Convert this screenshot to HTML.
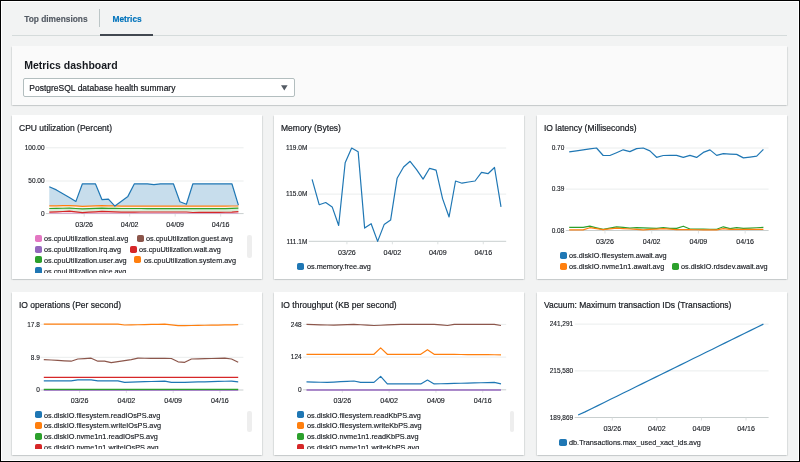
<!DOCTYPE html>
<html><head><meta charset="utf-8"><style>
html,body{margin:0;padding:0;}
.gs{will-change:transform;}
body{width:800px;height:462px;overflow:hidden;position:relative;background:#000;font-family:"Liberation Sans", sans-serif;}
#frame{position:absolute;left:1px;top:1px;width:798px;height:460px;background:#fff;}
#bg{position:absolute;left:2px;top:2px;width:796px;height:458px;background:#f2f3f3;}
.abs{position:absolute;}
.tab{position:absolute;font-size:8.35px;font-weight:700;line-height:8.5px;white-space:nowrap;-webkit-text-stroke:0.15px currentColor;}
.panel{position:absolute;background:#fff;box-shadow:0 0.8px 1.5px 0 rgba(0,28,36,.18),1px 1px 1px 0 rgba(0,28,36,.06),-1px 1px 1px 0 rgba(0,28,36,.06);}
.ptitle{position:absolute;transform:scaleX(0.944);transform-origin:0 0;font-size:9px;line-height:8.5px;color:#16191f;white-space:nowrap;-webkit-text-stroke:0.2px #16191f;}
.lclip{position:absolute;overflow:hidden;}
.sq{position:absolute;width:7.1px;height:7.0px;border-radius:1.8px;}
.lt{position:absolute;transform:scaleX(0.924);transform-origin:0 0;font-size:7.9px;line-height:9px;color:#16191f;white-space:nowrap;-webkit-text-stroke:0.15px #16191f;}
.sb{position:absolute;width:4.3px;background:#eeeeee;border-radius:2.2px;}
svg text{font-family:"Liberation Sans", sans-serif;fill:#16191f;}
.yl{font-size:6.5px;stroke:#16191f;stroke-width:0.12px;}
.xl{font-size:7.1px;stroke:#16191f;stroke-width:0.12px;}
</style></head><body>
<div id="frame"></div>
<div id="bg"></div>
<div class="gs abs" style="left:0;top:0;width:800px;height:462px">
<div class="tab" style="left:24.2px;top:14.9px;color:#545b64">Top dimensions</div>
<div class="abs" style="left:99px;top:9.4px;width:0.8px;height:18px;background:#bcc6c7"></div>
<div class="tab" style="left:112.5px;top:14.9px;color:#0073bb">Metrics</div>
<div class="abs" style="left:11.6px;top:35px;width:775.8px;height:1px;background:#d5dbdb"></div>
<div class="abs" style="left:100.1px;top:34.1px;width:52.7px;height:1.8px;background:#414750"></div>
<div class="panel" style="left:11.9px;top:46.1px;width:775.4px;height:59px;background:#fafafa"></div>
<div class="abs" style="left:24.2px;top:59.9px;font-size:10.5px;line-height:10.5px;font-weight:700;color:#16191f;white-space:nowrap">Metrics dashboard</div>
<div class="abs" style="left:23.4px;top:77.7px;width:269.4px;height:17.6px;border:1.3px solid #b3bebf;border-radius:2px;background:#fff"></div>
<div class="abs" style="left:29.3px;top:84.0px;font-size:8.5px;line-height:8.5px;color:#16191f;white-space:nowrap;-webkit-text-stroke:0.2px #16191f">PostgreSQL database health summary</div>
<svg class="abs" style="left:0;top:0" width="800" height="462"><polygon points="281,85.2 287.6,85.2 284.3,90.4" fill="#545b64"/></svg>
<div class="panel" style="left:11.7px;top:115.0px;width:250.40px;height:164.00px"></div><div class="ptitle" style="left:19.00px;top:124.03px">CPU utilization (Percent)</div><div class="lclip" style="left:11.7px;top:232.0px;width:230.40px;height:41.00px"><div class="sq" style="left:22.90px;top:2.60px;background:#e377c2"></div><div class="lt" style="left:32.50px;top:1.86px">os.cpuUtilization.steal.avg</div><div class="sq" style="left:125.10px;top:2.60px;background:#8c564b"></div><div class="lt" style="left:134.70px;top:1.86px">os.cpuUtilization.guest.avg</div><div class="sq" style="left:22.90px;top:13.50px;background:#9467bd"></div><div class="lt" style="left:32.50px;top:12.76px">os.cpuUtilization.irq.avg</div><div class="sq" style="left:118.10px;top:13.50px;background:#d62728"></div><div class="lt" style="left:127.70px;top:12.76px">os.cpuUtilization.wait.avg</div><div class="sq" style="left:22.90px;top:24.40px;background:#2ca02c"></div><div class="lt" style="left:32.50px;top:23.66px">os.cpuUtilization.user.avg</div><div class="sq" style="left:122.40px;top:24.40px;background:#ff7f0e"></div><div class="lt" style="left:132.00px;top:23.66px">os.cpuUtilization.system.avg</div><div class="sq" style="left:22.90px;top:35.30px;background:#1f77b4"></div><div class="lt" style="left:32.50px;top:34.56px">os.cpuUtilization.nice.avg</div></div><div class="sb" style="left:247.3px;top:234.9px;height:23.10px"></div><div class="panel" style="left:274.0px;top:115.0px;width:250.40px;height:164.00px"></div><div class="ptitle" style="left:281.30px;top:124.03px">Memory (Bytes)</div><div class="lclip" style="left:274.0px;top:260.8px;width:246.40px;height:40px"><div class="sq" style="left:23.30px;top:2.00px;background:#1f77b4"></div><div class="lt" style="left:32.90px;top:1.26px">os.memory.free.avg</div></div><div class="panel" style="left:536.6px;top:115.0px;width:250.40px;height:164.00px"></div><div class="ptitle" style="left:543.90px;top:124.03px">IO latency (Milliseconds)</div><div class="lclip" style="left:536.6px;top:249.9px;width:246.40px;height:40px"><div class="sq" style="left:23.20px;top:2.00px;background:#1f77b4"></div><div class="lt" style="left:32.80px;top:1.26px">os.diskIO.filesystem.await.avg</div><div class="sq" style="left:23.20px;top:12.90px;background:#ff7f0e"></div><div class="lt" style="left:32.80px;top:12.16px">os.diskIO.nvme1n1.await.avg</div><div class="sq" style="left:135.30px;top:12.90px;background:#2ca02c"></div><div class="lt" style="left:144.90px;top:12.16px">os.diskIO.rdsdev.await.avg</div></div><div class="panel" style="left:11.7px;top:291.6px;width:250.40px;height:163.00px"></div><div class="ptitle" style="left:19.00px;top:300.63px">IO operations (Per second)</div><div class="lclip" style="left:11.7px;top:408.5px;width:230.40px;height:40.70px"><div class="sq" style="left:22.90px;top:2.80px;background:#1f77b4"></div><div class="lt" style="left:32.50px;top:2.06px">os.diskIO.filesystem.readIOsPS.avg</div><div class="sq" style="left:22.90px;top:13.70px;background:#ff7f0e"></div><div class="lt" style="left:32.50px;top:12.96px">os.diskIO.filesystem.writeIOsPS.avg</div><div class="sq" style="left:22.90px;top:24.60px;background:#2ca02c"></div><div class="lt" style="left:32.50px;top:23.86px">os.diskIO.nvme1n1.readIOsPS.avg</div><div class="sq" style="left:22.90px;top:35.50px;background:#d62728"></div><div class="lt" style="left:32.50px;top:34.76px">os.diskIO.nvme1n1.writeIOsPS.avg</div></div><div class="sb" style="left:247.3px;top:411.0px;height:20.60px"></div><div class="panel" style="left:274.0px;top:291.6px;width:250.40px;height:163.00px"></div><div class="ptitle" style="left:281.30px;top:300.63px">IO throughput (KB per second)</div><div class="lclip" style="left:274.0px;top:408.5px;width:230.40px;height:40.70px"><div class="sq" style="left:23.00px;top:2.80px;background:#1f77b4"></div><div class="lt" style="left:32.60px;top:2.06px">os.diskIO.filesystem.readKbPS.avg</div><div class="sq" style="left:23.00px;top:13.70px;background:#ff7f0e"></div><div class="lt" style="left:32.60px;top:12.96px">os.diskIO.filesystem.writeKbPS.avg</div><div class="sq" style="left:23.00px;top:24.60px;background:#2ca02c"></div><div class="lt" style="left:32.60px;top:23.86px">os.diskIO.nvme1n1.readKbPS.avg</div><div class="sq" style="left:23.00px;top:35.50px;background:#d62728"></div><div class="lt" style="left:32.60px;top:34.76px">os.diskIO.nvme1n1.writeKbPS.avg</div></div><div class="sb" style="left:509.9px;top:411.0px;height:20.60px"></div><div class="panel" style="left:536.6px;top:291.6px;width:250.40px;height:163.00px"></div><div class="ptitle" style="left:543.90px;top:300.63px">Vacuum: Maximum transaction IDs (Transactions)</div><div class="lclip" style="left:536.6px;top:437.0px;width:246.40px;height:40px"><div class="sq" style="left:22.90px;top:2.00px;background:#1f77b4"></div><div class="lt" style="left:32.50px;top:1.26px">db.Transactions.max_used_xact_ids.avg</div></div>
<svg class="abs" style="left:0;top:0" width="800" height="462" viewBox="0 0 800 462">
<line x1="45.90" y1="147.8" x2="243.60" y2="147.8" stroke="#eaeded" stroke-width="1"/><text x="44.6" y="150.00" text-anchor="end" class="yl">100.00</text><line x1="45.90" y1="181.0" x2="243.60" y2="181.0" stroke="#eaeded" stroke-width="1"/><text x="44.6" y="183.20" text-anchor="end" class="yl">50.00</text><line x1="45.90" y1="213.6" x2="243.60" y2="213.6" stroke="#c9cfcf" stroke-width="1"/><text x="44.6" y="215.80" text-anchor="end" class="yl">0</text><line x1="84.16" y1="213.6" x2="84.16" y2="216.6" stroke="#d5dbdb" stroke-width="0.8"/><text x="84.16" y="226.90" text-anchor="middle" class="xl">03/26</text><line x1="129.66" y1="213.6" x2="129.66" y2="216.6" stroke="#d5dbdb" stroke-width="0.8"/><text x="129.66" y="226.90" text-anchor="middle" class="xl">04/02</text><line x1="175.16" y1="213.6" x2="175.16" y2="216.6" stroke="#d5dbdb" stroke-width="0.8"/><text x="175.16" y="226.90" text-anchor="middle" class="xl">04/09</text><line x1="220.66" y1="213.6" x2="220.66" y2="216.6" stroke="#d5dbdb" stroke-width="0.8"/><text x="220.66" y="226.90" text-anchor="middle" class="xl">04/16</text><polygon points="49.30,186.70 56.40,189.90 62.90,193.73 69.40,197.57 75.90,201.40 82.40,183.80 88.90,183.80 95.40,183.80 101.90,199.60 108.40,199.10 114.90,206.10 121.40,201.25 127.90,196.40 134.40,183.80 140.90,183.80 147.40,183.80 153.90,184.60 160.40,183.80 166.90,183.80 173.40,183.80 179.90,201.70 186.40,204.30 192.90,183.80 199.40,183.80 205.90,183.80 212.40,183.80 218.90,183.80 225.40,183.80 231.90,183.80 238.40,205.10 238.40,206.00 231.90,206.02 225.40,206.04 218.90,206.07 212.40,206.09 205.90,206.11 199.40,206.13 192.90,206.16 186.40,206.18 179.90,206.20 173.40,206.19 166.90,206.18 160.40,206.17 153.90,206.16 147.40,206.14 140.90,206.13 134.40,206.12 127.90,206.11 121.40,206.10 114.90,205.97 108.40,205.83 101.90,205.70 95.40,205.90 88.90,206.10 82.40,206.30 75.90,205.95 69.40,205.60 62.90,205.70 56.40,205.80 49.30,205.90" fill="#1f77b4" fill-opacity="0.25" stroke="none"/><polygon points="49.30,205.90 56.40,205.80 62.90,205.70 69.40,205.60 75.90,205.95 82.40,206.30 88.90,206.10 95.40,205.90 101.90,205.70 108.40,205.83 114.90,205.97 121.40,206.10 127.90,206.11 134.40,206.12 140.90,206.13 147.40,206.14 153.90,206.16 160.40,206.17 166.90,206.18 173.40,206.19 179.90,206.20 186.40,206.18 192.90,206.16 199.40,206.13 205.90,206.11 212.40,206.09 218.90,206.07 225.40,206.04 231.90,206.02 238.40,206.00 238.40,208.20 231.90,208.40 225.40,208.60 218.90,208.59 212.40,208.59 205.90,208.58 199.40,208.57 192.90,208.57 186.40,208.56 179.90,208.56 173.40,208.55 166.90,208.54 160.40,208.54 153.90,208.53 147.40,208.53 140.90,208.52 134.40,208.51 127.90,208.51 121.40,208.50 114.90,208.40 108.40,208.30 101.90,208.20 95.40,208.43 88.90,208.67 82.40,208.90 75.90,208.50 69.40,208.10 62.90,208.23 56.40,208.37 49.30,208.50" fill="#ff7f0e" fill-opacity="0.1" stroke="none"/><polygon points="49.30,208.50 56.40,208.37 62.90,208.23 69.40,208.10 75.90,208.50 82.40,208.90 88.90,208.67 95.40,208.43 101.90,208.20 108.40,208.30 114.90,208.40 121.40,208.50 127.90,208.51 134.40,208.51 140.90,208.52 147.40,208.53 153.90,208.53 160.40,208.54 166.90,208.54 173.40,208.55 179.90,208.56 186.40,208.56 192.90,208.57 199.40,208.57 205.90,208.58 212.40,208.59 218.90,208.59 225.40,208.60 231.90,208.40 238.40,208.20 238.40,211.60 231.90,212.20 225.40,212.25 218.90,212.30 212.40,212.35 205.90,212.40 199.40,212.45 192.90,212.50 186.40,212.00 179.90,212.00 173.40,212.00 166.90,212.00 160.40,212.00 153.90,212.00 147.40,212.00 140.90,212.00 134.40,212.03 127.90,212.07 121.40,212.10 114.90,211.87 108.40,211.63 101.90,211.40 95.40,211.80 88.90,212.20 82.40,212.60 75.90,211.90 69.40,211.20 62.90,211.50 56.40,211.80 49.30,212.10" fill="#2ca02c" fill-opacity="0.18" stroke="none"/><polygon points="49.30,212.10 56.40,211.80 62.90,211.50 69.40,211.20 75.90,211.90 82.40,212.60 88.90,212.20 95.40,211.80 101.90,211.40 108.40,211.63 114.90,211.87 121.40,212.10 127.90,212.07 134.40,212.03 140.90,212.00 147.40,212.00 153.90,212.00 160.40,212.00 166.90,212.00 173.40,212.00 179.90,212.00 186.40,212.00 192.90,212.50 199.40,212.45 205.90,212.40 212.40,212.35 218.90,212.30 225.40,212.25 231.90,212.20 238.40,211.60 238.40,213.20 231.90,213.20 225.40,213.20 218.90,213.20 212.40,213.20 205.90,213.20 199.40,213.20 192.90,213.20 186.40,213.20 179.90,213.20 173.40,213.20 166.90,213.20 160.40,213.20 153.90,213.20 147.40,213.20 140.90,213.20 134.40,213.20 127.90,213.20 121.40,213.20 114.90,213.20 108.40,213.20 101.90,213.20 95.40,213.20 88.90,213.20 82.40,213.20 75.90,213.20 69.40,213.20 62.90,213.20 56.40,213.20 49.30,213.20" fill="#d62728" fill-opacity="0.08" stroke="none"/><polyline points="49.30,213.20 56.40,213.20 62.90,213.20 69.40,213.20 75.90,213.20 82.40,213.20 88.90,213.20 95.40,213.20 101.90,213.20 108.40,213.20 114.90,213.20 121.40,213.20 127.90,213.20 134.40,213.20 140.90,213.20 147.40,213.20 153.90,213.20 160.40,213.20 166.90,213.20 173.40,213.20 179.90,213.20 186.40,213.20 192.90,213.20 199.40,213.20 205.90,213.20 212.40,213.20 218.90,213.20 225.40,213.20 231.90,213.20 238.40,213.20" fill="none" stroke="#e377c2" stroke-width="0.6" stroke-linejoin="round"/><polyline points="49.30,212.10 56.40,211.80 62.90,211.50 69.40,211.20 75.90,211.90 82.40,212.60 88.90,212.20 95.40,211.80 101.90,211.40 108.40,211.63 114.90,211.87 121.40,212.10 127.90,212.07 134.40,212.03 140.90,212.00 147.40,212.00 153.90,212.00 160.40,212.00 166.90,212.00 173.40,212.00 179.90,212.00 186.40,212.00 192.90,212.50 199.40,212.45 205.90,212.40 212.40,212.35 218.90,212.30 225.40,212.25 231.90,212.20 238.40,211.60" fill="none" stroke="#d62728" stroke-width="1.2" stroke-linejoin="round"/><polyline points="49.30,208.50 56.40,208.37 62.90,208.23 69.40,208.10 75.90,208.50 82.40,208.90 88.90,208.67 95.40,208.43 101.90,208.20 108.40,208.30 114.90,208.40 121.40,208.50 127.90,208.51 134.40,208.51 140.90,208.52 147.40,208.53 153.90,208.53 160.40,208.54 166.90,208.54 173.40,208.55 179.90,208.56 186.40,208.56 192.90,208.57 199.40,208.57 205.90,208.58 212.40,208.59 218.90,208.59 225.40,208.60 231.90,208.40 238.40,208.20" fill="none" stroke="#2ca02c" stroke-width="1.2" stroke-linejoin="round"/><polyline points="49.30,205.90 56.40,205.80 62.90,205.70 69.40,205.60 75.90,205.95 82.40,206.30 88.90,206.10 95.40,205.90 101.90,205.70 108.40,205.83 114.90,205.97 121.40,206.10 127.90,206.11 134.40,206.12 140.90,206.13 147.40,206.14 153.90,206.16 160.40,206.17 166.90,206.18 173.40,206.19 179.90,206.20 186.40,206.18 192.90,206.16 199.40,206.13 205.90,206.11 212.40,206.09 218.90,206.07 225.40,206.04 231.90,206.02 238.40,206.00" fill="none" stroke="#ff7f0e" stroke-width="1.2" stroke-linejoin="round"/><polyline points="49.30,186.70 56.40,189.90 62.90,193.73 69.40,197.57 75.90,201.40 82.40,183.80 88.90,183.80 95.40,183.80 101.90,199.60 108.40,199.10 114.90,206.10 121.40,201.25 127.90,196.40 134.40,183.80 140.90,183.80 147.40,183.80 153.90,184.60 160.40,183.80 166.90,183.80 173.40,183.80 179.90,201.70 186.40,204.30 192.90,183.80 199.40,183.80 205.90,183.80 212.40,183.80 218.90,183.80 225.40,183.80 231.90,183.80 238.40,205.10" fill="none" stroke="#1f77b4" stroke-width="1.2" stroke-linejoin="round"/><line x1="308.70" y1="148.0" x2="506.20" y2="148.0" stroke="#eaeded" stroke-width="1"/><text x="307.3" y="150.20" text-anchor="end" class="yl">119.0M</text><line x1="308.70" y1="194.1" x2="506.20" y2="194.1" stroke="#eaeded" stroke-width="1"/><text x="307.3" y="196.30" text-anchor="end" class="yl">115.0M</text><line x1="308.70" y1="241.3" x2="506.20" y2="241.3" stroke="#c9cfcf" stroke-width="1"/><text x="307.3" y="243.50" text-anchor="end" class="yl">111.1M</text><line x1="346.92" y1="241.3" x2="346.92" y2="244.3" stroke="#d5dbdb" stroke-width="0.8"/><text x="346.92" y="254.50" text-anchor="middle" class="xl">03/26</text><line x1="392.37" y1="241.3" x2="392.37" y2="244.3" stroke="#d5dbdb" stroke-width="0.8"/><text x="392.37" y="254.50" text-anchor="middle" class="xl">04/02</text><line x1="437.82" y1="241.3" x2="437.82" y2="244.3" stroke="#d5dbdb" stroke-width="0.8"/><text x="437.82" y="254.50" text-anchor="middle" class="xl">04/09</text><line x1="483.27" y1="241.3" x2="483.27" y2="244.3" stroke="#d5dbdb" stroke-width="0.8"/><text x="483.27" y="254.50" text-anchor="middle" class="xl">04/16</text><polyline points="312.10,179.40 319.19,204.70 325.69,202.50 332.18,206.90 338.67,225.50 345.17,162.70 351.66,148.00 358.15,151.70 364.64,228.10 371.14,223.70 377.63,241.40 384.12,224.60 390.62,220.10 397.11,178.30 403.60,167.00 410.10,161.30 416.59,169.70 423.08,179.10 429.58,168.30 436.07,170.20 442.56,198.60 449.06,217.00 455.55,181.00 462.04,183.20 468.53,182.00 475.03,181.00 481.52,172.40 488.01,173.70 494.51,167.50 501.00,206.80" fill="none" stroke="#1f77b4" stroke-width="1.2" stroke-linejoin="round"/><line x1="565.80" y1="148.0" x2="768.60" y2="148.0" stroke="#eaeded" stroke-width="1"/><text x="564.3" y="150.20" text-anchor="end" class="yl">0.70</text><line x1="565.80" y1="189.1" x2="768.60" y2="189.1" stroke="#eaeded" stroke-width="1"/><text x="564.3" y="191.30" text-anchor="end" class="yl">0.39</text><line x1="565.80" y1="230.5" x2="768.60" y2="230.5" stroke="#c9cfcf" stroke-width="1"/><text x="564.3" y="232.70" text-anchor="end" class="yl">0.08</text><line x1="604.98" y1="230.5" x2="604.98" y2="233.5" stroke="#d5dbdb" stroke-width="0.8"/><text x="604.98" y="243.70" text-anchor="middle" class="xl">03/26</text><line x1="651.71" y1="230.5" x2="651.71" y2="233.5" stroke="#d5dbdb" stroke-width="0.8"/><text x="651.71" y="243.70" text-anchor="middle" class="xl">04/02</text><line x1="698.44" y1="230.5" x2="698.44" y2="233.5" stroke="#d5dbdb" stroke-width="0.8"/><text x="698.44" y="243.70" text-anchor="middle" class="xl">04/09</text><line x1="745.17" y1="230.5" x2="745.17" y2="233.5" stroke="#d5dbdb" stroke-width="0.8"/><text x="745.17" y="243.70" text-anchor="middle" class="xl">04/16</text><polyline points="569.20,227.40 576.48,227.40 583.15,227.40 589.83,226.20 596.50,227.80 603.18,229.40 609.86,228.10 616.53,226.80 623.21,227.45 629.88,228.10 636.56,227.70 643.23,227.93 649.91,228.17 656.59,228.40 663.26,227.70 669.94,228.40 676.61,228.40 683.29,226.20 689.97,229.00 696.64,229.07 703.32,229.15 709.99,229.23 716.67,229.30 723.34,226.80 730.02,228.60 736.70,227.70 743.37,228.40 750.05,228.07 756.72,227.73 763.40,227.40" fill="none" stroke="#2ca02c" stroke-width="1.2" stroke-linejoin="round"/><polyline points="569.20,229.90 576.48,229.90 583.15,229.90 589.83,227.70 596.50,228.70 603.18,229.70 609.86,228.90 616.53,228.10 623.21,228.55 629.88,229.00 636.56,229.45 643.23,229.90 649.91,229.47 656.59,229.03 663.26,228.60 669.94,229.15 676.61,229.70 683.29,229.70 689.97,229.70 696.64,229.75 703.32,229.80 709.99,229.85 716.67,229.90 723.34,228.60 730.02,229.30 736.70,229.30 743.37,229.30 750.05,229.30 756.72,229.30 763.40,229.30" fill="none" stroke="#ff7f0e" stroke-width="1.2" stroke-linejoin="round"/><polyline points="569.20,151.80 576.48,150.85 583.15,149.90 589.83,148.95 596.50,148.00 603.18,155.50 609.86,155.50 616.53,152.70 623.21,149.80 629.88,151.60 636.56,148.60 643.23,148.00 649.91,150.90 656.59,157.30 663.26,155.50 669.94,155.45 676.61,155.40 683.29,157.40 689.97,155.40 696.64,157.40 703.32,152.40 709.99,149.90 716.67,155.40 723.34,153.70 730.02,154.05 736.70,154.40 743.37,157.90 750.05,157.05 756.72,156.20 763.40,149.40" fill="none" stroke="#1f77b4" stroke-width="1.2" stroke-linejoin="round"/><line x1="40.40" y1="324.3" x2="243.40" y2="324.3" stroke="#eaeded" stroke-width="1"/><text x="39.9" y="326.50" text-anchor="end" class="yl">17.8</text><line x1="40.40" y1="357.3" x2="243.40" y2="357.3" stroke="#eaeded" stroke-width="1"/><text x="39.9" y="359.50" text-anchor="end" class="yl">8.9</text><line x1="40.40" y1="390.0" x2="243.40" y2="390.0" stroke="#c9cfcf" stroke-width="1"/><text x="39.9" y="392.20" text-anchor="end" class="yl">0</text><line x1="79.62" y1="390.0" x2="79.62" y2="393.0" stroke="#d5dbdb" stroke-width="0.8"/><text x="79.62" y="402.80" text-anchor="middle" class="xl">03/26</text><line x1="126.40" y1="390.0" x2="126.40" y2="393.0" stroke="#d5dbdb" stroke-width="0.8"/><text x="126.40" y="402.80" text-anchor="middle" class="xl">04/02</text><line x1="173.18" y1="390.0" x2="173.18" y2="393.0" stroke="#d5dbdb" stroke-width="0.8"/><text x="173.18" y="402.80" text-anchor="middle" class="xl">04/09</text><line x1="219.96" y1="390.0" x2="219.96" y2="393.0" stroke="#d5dbdb" stroke-width="0.8"/><text x="219.96" y="402.80" text-anchor="middle" class="xl">04/16</text><polyline points="43.80,390.20 51.08,390.20 57.77,390.20 64.45,390.20 71.13,390.20 77.81,390.20 84.50,390.20 91.18,390.20 97.86,390.20 104.54,390.20 111.23,390.20 117.91,390.20 124.59,390.20 131.28,390.20 137.96,390.20 144.64,390.20 151.32,390.20 158.01,390.20 164.69,390.20 171.37,390.20 178.06,390.20 184.74,390.20 191.42,390.20 198.10,390.20 204.79,390.20 211.47,390.20 218.15,390.20 224.83,390.20 231.52,390.20 238.20,390.20" fill="none" stroke="#9467bd" stroke-width="1.2" stroke-linejoin="round"/><polyline points="43.80,389.30 51.08,389.30 57.77,389.30 64.45,389.30 71.13,389.30 77.81,389.30 84.50,389.30 91.18,389.30 97.86,389.30 104.54,389.30 111.23,389.30 117.91,389.30 124.59,389.30 131.28,389.30 137.96,389.30 144.64,389.30 151.32,389.30 158.01,389.30 164.69,389.30 171.37,389.30 178.06,389.30 184.74,389.30 191.42,389.30 198.10,389.30 204.79,389.30 211.47,389.30 218.15,389.30 224.83,389.30 231.52,389.30 238.20,389.30" fill="none" stroke="#2ca02c" stroke-width="1.2" stroke-linejoin="round"/><polyline points="43.80,380.80 51.08,380.80 57.77,380.80 64.45,380.80 71.13,380.80 77.81,379.80 84.50,379.80 91.18,379.80 97.86,380.80 104.54,380.80 111.23,380.80 117.91,380.80 124.59,382.30 131.28,382.10 137.96,381.90 144.64,381.70 151.32,381.50 158.01,381.30 164.69,381.10 171.37,382.30 178.06,382.30 184.74,382.30 191.42,382.13 198.10,381.96 204.79,381.79 211.47,381.61 218.15,381.44 224.83,381.27 231.52,381.10 238.20,381.80" fill="none" stroke="#1f77b4" stroke-width="1.2" stroke-linejoin="round"/><polyline points="43.80,377.30 51.08,377.30 57.77,377.30 64.45,377.30 71.13,377.30 77.81,377.30 84.50,377.30 91.18,377.30 97.86,377.30 104.54,377.30 111.23,377.30 117.91,377.30 124.59,377.30 131.28,377.30 137.96,377.30 144.64,377.30 151.32,377.30 158.01,377.30 164.69,377.30 171.37,377.30 178.06,377.30 184.74,377.30 191.42,377.30 198.10,377.30 204.79,377.30 211.47,377.30 218.15,377.30 224.83,377.30 231.52,377.30 238.20,377.30" fill="none" stroke="#d62728" stroke-width="1.2" stroke-linejoin="round"/><polyline points="43.80,359.60 51.08,360.00 57.77,360.40 64.45,360.80 71.13,361.20 77.81,359.00 84.50,358.60 91.18,358.20 97.86,361.20 104.54,361.20 111.23,362.60 117.91,361.60 124.59,360.60 131.28,359.60 137.96,358.20 144.64,358.26 151.32,358.32 158.01,358.38 164.69,358.44 171.37,358.50 178.06,361.80 184.74,362.30 191.42,359.00 198.10,358.84 204.79,358.68 211.47,358.52 218.15,358.36 224.83,358.20 231.52,359.00 238.20,362.30" fill="none" stroke="#8c564b" stroke-width="1.2" stroke-linejoin="round"/><polyline points="43.80,324.10 51.08,324.10 57.77,324.10 64.45,324.10 71.13,324.10 77.81,324.10 84.50,324.10 91.18,324.10 97.86,324.10 104.54,324.10 111.23,324.10 117.91,324.10 124.59,325.00 131.28,324.87 137.96,324.73 144.64,324.60 151.32,324.47 158.01,324.33 164.69,324.20 171.37,324.90 178.06,325.60 184.74,325.60 191.42,325.49 198.10,325.38 204.79,325.26 211.47,325.15 218.15,325.04 224.83,324.93 231.52,324.81 238.20,324.70" fill="none" stroke="#ff7f0e" stroke-width="1.2" stroke-linejoin="round"/><line x1="303.10" y1="324.4" x2="506.20" y2="324.4" stroke="#eaeded" stroke-width="1"/><text x="301.7" y="326.60" text-anchor="end" class="yl">248</text><line x1="303.10" y1="357.1" x2="506.20" y2="357.1" stroke="#eaeded" stroke-width="1"/><text x="301.7" y="359.30" text-anchor="end" class="yl">124</text><line x1="303.10" y1="389.8" x2="506.20" y2="389.8" stroke="#c9cfcf" stroke-width="1"/><text x="301.7" y="392.00" text-anchor="end" class="yl">0</text><line x1="342.34" y1="389.8" x2="342.34" y2="392.8" stroke="#d5dbdb" stroke-width="0.8"/><text x="342.34" y="403.00" text-anchor="middle" class="xl">03/26</text><line x1="389.14" y1="389.8" x2="389.14" y2="392.8" stroke="#d5dbdb" stroke-width="0.8"/><text x="389.14" y="403.00" text-anchor="middle" class="xl">04/02</text><line x1="435.94" y1="389.8" x2="435.94" y2="392.8" stroke="#d5dbdb" stroke-width="0.8"/><text x="435.94" y="403.00" text-anchor="middle" class="xl">04/09</text><line x1="482.75" y1="389.8" x2="482.75" y2="392.8" stroke="#d5dbdb" stroke-width="0.8"/><text x="482.75" y="403.00" text-anchor="middle" class="xl">04/16</text><polyline points="306.50,381.90 313.79,382.07 320.47,382.23 327.16,382.40 333.84,382.05 340.53,381.70 347.22,381.35 353.90,381.00 360.59,382.40 367.28,382.40 373.96,382.40 380.65,376.40 387.33,383.90 394.02,383.90 400.71,383.90 407.39,383.90 414.08,383.90 420.77,383.90 427.45,380.10 434.14,383.90 440.82,383.73 447.51,383.57 454.20,383.40 460.88,383.23 467.57,383.07 474.26,382.90 480.94,382.73 487.63,382.57 494.31,382.40 501.00,383.90" fill="none" stroke="#1f77b4" stroke-width="1.2" stroke-linejoin="round"/><polyline points="306.50,354.30 313.79,354.30 320.47,354.30 327.16,354.30 333.84,354.30 340.53,354.30 347.22,354.30 353.90,354.30 360.59,354.30 367.28,354.30 373.96,354.30 380.65,347.90 387.33,354.30 394.02,354.30 400.71,354.30 407.39,354.30 414.08,354.30 420.77,354.30 427.45,349.70 434.14,354.30 440.82,354.35 447.51,354.40 454.20,354.45 460.88,354.50 467.57,354.55 474.26,354.60 480.94,354.65 487.63,354.70 494.31,354.75 501.00,354.80" fill="none" stroke="#ff7f0e" stroke-width="1.2" stroke-linejoin="round"/><polyline points="306.50,324.40 313.79,324.60 320.47,324.80 327.16,325.00 333.84,325.20 340.53,324.93 347.22,324.67 353.90,324.40 360.59,324.77 367.28,325.13 373.96,325.50 380.65,325.23 387.33,324.95 394.02,324.67 400.71,324.40 407.39,324.40 414.08,324.40 420.77,324.40 427.45,324.40 434.14,324.40 440.82,324.95 447.51,325.50 454.20,324.40 460.88,324.40 467.57,324.40 474.26,324.40 480.94,324.40 487.63,324.40 494.31,324.40 501.00,325.50" fill="none" stroke="#8c564b" stroke-width="1.2" stroke-linejoin="round"/><polyline points="306.50,390.00 313.79,390.00 320.47,390.00 327.16,390.00 333.84,390.00 340.53,390.00 347.22,390.00 353.90,390.00 360.59,390.00 367.28,390.00 373.96,390.00 380.65,390.00 387.33,390.00 394.02,390.00 400.71,390.00 407.39,390.00 414.08,390.00 420.77,390.00 427.45,390.00 434.14,390.00 440.82,390.00 447.51,390.00 454.20,390.00 460.88,390.00 467.57,390.00 474.26,390.00 480.94,390.00 487.63,390.00 494.31,390.00 501.00,390.00" fill="none" stroke="#9467bd" stroke-width="1.6" stroke-linejoin="round"/><line x1="574.70" y1="324.1" x2="768.60" y2="324.1" stroke="#eaeded" stroke-width="1"/><text x="573.2" y="326.30" text-anchor="end" class="yl">241,291</text><line x1="574.70" y1="370.9" x2="768.60" y2="370.9" stroke="#eaeded" stroke-width="1"/><text x="573.2" y="373.10" text-anchor="end" class="yl">215,580</text><line x1="574.70" y1="417.5" x2="768.60" y2="417.5" stroke="#c9cfcf" stroke-width="1"/><text x="573.2" y="419.70" text-anchor="end" class="yl">189,869</text><line x1="612.26" y1="417.5" x2="612.26" y2="420.5" stroke="#d5dbdb" stroke-width="0.8"/><text x="612.26" y="430.80" text-anchor="middle" class="xl">03/26</text><line x1="656.85" y1="417.5" x2="656.85" y2="420.5" stroke="#d5dbdb" stroke-width="0.8"/><text x="656.85" y="430.80" text-anchor="middle" class="xl">04/02</text><line x1="701.43" y1="417.5" x2="701.43" y2="420.5" stroke="#d5dbdb" stroke-width="0.8"/><text x="701.43" y="430.80" text-anchor="middle" class="xl">04/09</text><line x1="746.01" y1="417.5" x2="746.01" y2="420.5" stroke="#d5dbdb" stroke-width="0.8"/><text x="746.01" y="430.80" text-anchor="middle" class="xl">04/16</text><polyline points="578.10,415.00 585.07,411.87 591.44,408.73 597.81,405.60 604.18,402.46 610.54,399.33 616.91,396.19 623.28,393.06 629.65,389.92 636.02,386.79 642.39,383.66 648.76,380.52 655.13,377.39 661.50,374.25 667.87,371.12 674.23,367.98 680.60,364.85 686.97,361.71 693.34,358.58 699.71,355.44 706.08,352.31 712.45,349.18 718.82,346.04 725.19,342.91 731.56,339.77 737.92,336.64 744.29,333.50 750.66,330.37 757.03,327.23 763.40,324.10" fill="none" stroke="#1f77b4" stroke-width="1.2" stroke-linejoin="round"/>
</svg>
</div>
</body></html>
